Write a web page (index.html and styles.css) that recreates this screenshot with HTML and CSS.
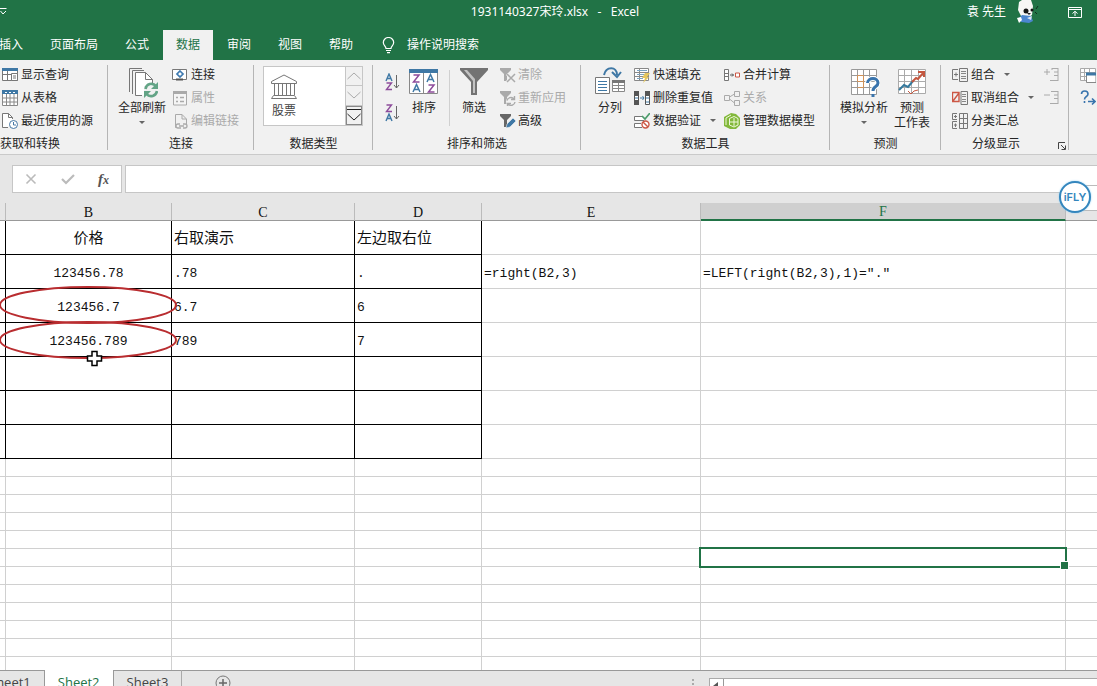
FILE: index.html
```html
<!DOCTYPE html>
<html lang="zh-CN">
<head>
<meta charset="utf-8">
<title>1931140327宋玲.xlsx - Excel</title>
<link rel="stylesheet" href="styles.css">
</head>
<body>
<div class="app">
<header class="titlebar">
  <button class="qat" aria-label="自定义快速访问工具栏"><svg width="8" height="8" viewBox="0 0 8 8"><path d="M0 .5H6.500M.5 3L3 6L6 3" fill="none" stroke="#fff"/></svg></button>
  <h1 class="doc-title">1931140327宋玲.xlsx&nbsp;&nbsp; -&nbsp;&nbsp; Excel</h1>
  <div class="account">
    <span>袁 先生</span>
    <svg class="avatar" width="24" height="24" viewBox="0 0 24 24"><path d="M3 2L6 0H15L17 6L16 15L13 17L5 16L2 10Z" fill="#f7f7f5"/><path d="M3 18L6 15L15 16L17 21L13 23L5 22Z" fill="#4c86cf"/><path d="M1 18L5 17L6 20L3 23Z" fill="#fff"/><path d="M11 18L16 16L15 20Z" fill="#dce8f4"/><circle cx="10" cy="11" r="2.500" fill="#161616"/><circle cx="16" cy="10" r="1.500" fill="#161616"/><path d="M11 13L15 13L13 15Z" fill="#222"/><path d="M20 9L22 6M19 12L21 14" stroke="#102f1e"/></svg>
    <button class="ribbon-toggle" aria-label="功能区显示选项"><svg width="14" height="11" viewBox="0 0 14 11"><path d="M.5 .5H13.500V10.500H.5ZM.5 2.500H13.500M7 9V4.500M4.500 6.500L7 4.300L9.500 6.500" fill="none" stroke="#fff"/></svg></button>
  </div>
</header>
<nav class="tabs">
  <button>插入</button><button>页面布局</button><button>公式</button><button class="active">数据</button><button>审阅</button><button>视图</button><button>帮助</button>
  <button class="tell"><svg width="13" height="17" viewBox="0 0 13 17"><path d="M4 11.500C4 9 1.300 8.500 1.300 5.500A5.200 5 0 0 1 11.700 5.500C11.700 8.500 9 9 9 11.500ZM4 13.500H9M5 15.700H8" fill="none" stroke="#fff" stroke-width="1.200"/></svg>操作说明搜索</button>
</nav>

<section class="ribbon" aria-label="数据">
  <div class="group g-get">
    <div class="body"><div class="stack">
      <button><svg viewBox="0 0 16 16"><path d="M.5 1.500H15.500V13.500H.5ZM.5 7.500H9.500M5.500 4V13" fill="#fff" stroke="#777"/><path d="M0 1H16V4H0Z" fill="#3f78a5"/><path d="M9.500 6.500H15.500V13.500H9.500Z" fill="#fff" stroke="#777"/><path d="M11 9H14M11 11H14" stroke="#777"/></svg>显示查询</button>
      <button><svg viewBox="0 0 16 16"><path d="M.5 .5H15.500V15.500H.5ZM.5 8H16M.5 12H16M4.500 3V16M8 3V16M12 3V16" fill="#fff" stroke="#888"/><path d="M0 0H16V4H0Z" fill="#3f78a5"/><path d="M3 2.500H5M7 2.500H9M11 2.500H13" stroke="#fff"/></svg>从表格</button>
      <button><svg viewBox="0 0 16 16"><path d="M6 14.500H.5V.5H6.500L10.500 4.500V6" fill="#fff" stroke="#777"/><path d="M6.500 .5V4.500H10.500" fill="none" stroke="#777"/><circle cx="11.500" cy="11.500" r="4" fill="#fff" stroke="#4677a5"/><path d="M11.500 9V12H14" fill="none" stroke="#4677a5"/></svg>最近使用的源</button>
    </div></div>
    <h2>获取和转换</h2>
  </div>

  <div class="group g-conn">
    <div class="body">
      <button class="big"><svg width="32" height="32" viewBox="0 0 32 32"><path d="M3.500 26V2.500H16M6.500 28V4.500H18" fill="none" stroke="#777"/><path d="M9.500 29.500V6.500H19.500L26.500 13.500V20H18V29.500Z" fill="#fff"/><path d="M16 29.500H9.500V6.500H19.500L26.500 13.500V17M19.500 6.500V13.500H26.500" fill="none" stroke="#777"/><path d="M19.500 23A6 6 0 0 1 30 20M31 25A6 6 0 0 1 20.500 28" fill="none" stroke="#63a486" stroke-width="2.600"/><path d="M32 16V23H25ZM18 32V25H25Z" fill="#63a486"/></svg><span>全部刷新</span><i class="caret"></i></button>
      <div class="stack">
        <button><svg viewBox="0 0 16 16"><path d="M.5 2.500H14.500V12.500H.5Z" fill="#fff" stroke="#777"/><path d="M8 4L11 7L8 10L5 7Z" fill="none" stroke="#3e7ab0" stroke-width="1.700"/><path d="M4 12.500H11" stroke="#555" stroke-width="2"/></svg>连接</button>
        <button disabled><svg viewBox="0 0 16 16"><path d="M1.500 1.500H14.500V15H1.500Z" fill="#f5f5f5" stroke="#aaa"/><path d="M1 2.500H15" stroke="#aaa" stroke-width="3"/><path d="M4 7.500H6M8 7.500H12M4 11.500H6M8 11.500H12" stroke="#aaa" stroke-width="1.500"/></svg>属性</button>
        <button disabled><svg viewBox="0 0 16 16"><path d="M5 14.500H3.500V1.500H10L14.500 6V11M10 1.500V6H14" fill="none" stroke="#aaa"/><path d="M8 11H6A2 2 0 0 0 6 15H9M11 11H13A2 2 0 0 1 13 15H11M7 13H12" fill="none" stroke="#aaa" stroke-width="1.300"/></svg>编辑链接</button>
      </div>
    </div>
    <h2>连接</h2>
  </div>

  <div class="group g-types">
    <div class="body">
      <div class="gallery">
        <button class="stock"><svg width="28" height="26" viewBox="0 0 28 26"><path d="M1.500 7.500L14 1L26.500 7.500V9.500H1.500ZM4.500 9.500V21M8.500 9.500V21M12.500 9.500V21M16.500 9.500V21M20.500 9.500V21M24.500 9.500V21M3.500 21.500H24.500L26.500 24.500H1.500Z" fill="none" stroke="#777"/></svg>股票</button>
        <div class="gallery-nav">
          <button disabled aria-label="上一行"><svg width="14" height="8" viewBox="0 0 14 8"><path d="M.5 7L7 1L13.500 7" fill="none" stroke="#aaa"/></svg></button>
          <button disabled aria-label="下一行"><svg width="14" height="8" viewBox="0 0 14 8"><path d="M.5 1L7 7L13.500 1" fill="none" stroke="#aaa"/></svg></button>
          <button class="more" aria-label="其他"><svg width="14" height="12" viewBox="0 0 14 12"><path d="M0 .5H14M.5 5L7 11L13.500 5" fill="none" stroke="#222"/></svg></button>
        </div>
      </div>
    </div>
    <h2>数据类型</h2>
  </div>

  <div class="group g-sort">
    <div class="body">
      <div class="az">
        <button aria-label="升序"><svg width="15" height="18" viewBox="0 0 15 18"><g fill="none" stroke-width="1.400"><path class="blue" d="M1 8L4 1L7 8M2 5.500H6"/><path class="violet" d="M1.500 10H6.500L1.500 16.500H7"/></g><path d="M11.500 2V15M9 12L11.500 15L14 12" fill="none" stroke="#666"/></svg></button>
        <button aria-label="降序"><svg width="15" height="18" viewBox="0 0 15 18"><g fill="none" stroke-width="1.400"><path class="violet" d="M1.500 1H6.500L1.500 7.500H7"/><path class="blue" d="M1 17L4 10L7 17M2 14.500H6"/></g><path d="M11.500 2V15M9 12L11.500 15L14 12" fill="none" stroke="#666"/></svg></button>
      </div>
      <button class="big sort"><svg width="30" height="32" viewBox="0 0 30 32"><path d="M.5 3.500H28.500V27.500H.5ZM14.500 7V27" fill="#fff" stroke="#888"/><path d="M0 3H29V7H0Z" fill="#3f78a5"/><g fill="none" stroke-width="1.500"><path class="violet" d="M4.500 9H10L4.500 16H10.500M19.500 19H25L19.500 26H25.500"/><path class="blue" d="M4 26L7.500 18.500L11 26M5 23.500H10M18 16L21.500 8.500L25 16M19 13.500H24"/></g></svg><span>排序</span></button>
      <div class="rule"></div>
      <button class="big filter"><svg width="28" height="32" viewBox="0 0 28 32"><path d="M0 2H28V4L17 16V29H11V16L0 4Z" fill="#737373"/><path d="M4 4H7L15 13V27H13V15Z" fill="#c2c2c2"/></svg><span>筛选</span></button>
      <div class="stack">
        <button disabled><svg viewBox="0 0 16 16"><path d="M0 1H11V3L7 7V14H4V7L0 3Z" fill="#aaa"/><path d="M7 7L15 15M15 7L7 15" stroke="#f1f1f1" stroke-width="3"/><path d="M7 7L15 15M15 7L7 15" stroke="#aaa" stroke-width="1.500"/></svg>清除</button>
        <button disabled><svg viewBox="0 0 16 16"><path d="M0 1H11V3L7 7V14H4V7L0 3Z" fill="#aaa"/><circle cx="11" cy="11.500" r="5" fill="#f1f1f1"/><path d="M7 10.500A4 4 0 0 1 14 9M15 12A4 4 0 0 1 8 14M14.500 6V9.500H11M7.500 16.500V13.500H11" fill="none" stroke="#aaa" stroke-width="1.400"/></svg>重新应用</button>
        <button><svg viewBox="0 0 16 16"><path d="M0 1H11V3L7 7V14H4V7L0 3Z" fill="#666"/><path d="M6 15L7 11L13 5L16 8L10 14Z" fill="#3f78a5" stroke="#f1f1f1" stroke-width=".6"/></svg>高级</button>
      </div>
    </div>
    <h2>排序和筛选</h2>
  </div>

  <div class="group g-tools">
    <div class="body">
      <button class="big"><svg width="32" height="32" viewBox="0 0 32 32"><path d="M1.500 11.500H15.500V27.500H1.500Z" fill="#fff" stroke="#777"/><path d="M4 15.500H13M4 18.500H13M4 21.500H13M4 24.500H13" stroke="#3f78a5"/><path d="M18.500 15.500H30.500V25.500H18.500ZM24.500 17V25M19 19.500H30M19 22.500H30" fill="#fff" stroke="#888"/><path d="M18 15.500H31" stroke="#777" stroke-width="3"/><path d="M10 9C12 0 23 0 23 9" fill="none" stroke="#3f78a5" stroke-width="2"/><path d="M18 6L23 11L27 6" fill="none" stroke="#3f78a5" stroke-width="2"/></svg><span>分列</span></button>
      <div class="stack">
        <button><svg viewBox="0 0 16 16"><path d="M.5 1.500H14.500V13.500H.5ZM.5 5.500H14M.5 9.500H14M5.500 1.500V13" fill="#fff" stroke="#888"/><path d="M3 3.500H13M3 7.500H12M3 11.500H9" stroke="#7ba4c2"/><path d="M11 6H16L13 10H15L9 16L11 11H8Z" fill="#e5c65f"/></svg>快速填充</button>
        <button><svg viewBox="0 0 16 16"><path d="M.5 1.500H4.500V14.500H.5ZM11.500 1.500H15.500V14.500H11.500Z" fill="#fff" stroke="#555"/><path d="M0 1H5V6H0ZM0 10H5V15H0ZM11 1H16V6H11Z" fill="#555"/><path d="M1 8H4M12 8H15M12 12H15M6 8H10M8.500 6L10 8L8.500 10" fill="none" stroke="#3f78a5"/></svg>删除重复值</button>
        <button><svg viewBox="0 0 16 16"><path d="M8 3.500H.5V7.500H10M7 10.500H.5V14.500H8" fill="#fff" stroke="#777"/><path d="M8 3L11 6L16 0" fill="none" stroke="#4b9b6a" stroke-width="1.700"/><circle cx="11.500" cy="11.500" r="3.500" fill="#fff" stroke="#cc5745" stroke-width="1.400"/><path d="M9 9L14 14" stroke="#cc5745" stroke-width="1.400"/></svg>数据验证<i class="caret"></i></button>
      </div>
      <div class="stack second">
        <button><svg viewBox="0 0 16 16"><path d="M.5 2.500H4.500V13.500H.5ZM.5 6.500H4M.5 9.500H4" fill="#fff" stroke="#777"/><path d="M6 8H9.500M8 6.500L9.500 8L8 9.500" fill="none" stroke="#555"/><path d="M11.500 6H15.500V10H11.500Z" fill="#fff" stroke="#cc5745"/></svg>合并计算</button>
        <button disabled><svg viewBox="0 0 16 16"><path d="M.5 5.500H5.500V10.500H.5ZM10.500 1.500H15.500V6.500H10.500ZM10.500 10.500H15.500V15.500H10.500ZM5.500 7L10.500 4M5.500 9L10.500 13" fill="none" stroke="#aaa"/></svg>关系</button>
        <button><svg viewBox="0 0 16 16"><path d="M0 4L7 0L12 1L16 5V12L12 16H6L0 13Z" fill="#82b83b"/><path d="M2 12V5L7 2M5.500 5.500L10 3.500L14 5.500V12L10 14L5.500 12ZM10 5V13M5.500 9H14" fill="none" stroke="#eff8dc"/></svg>管理数据模型</button>
      </div>
    </div>
    <h2>数据工具</h2>
  </div>

  <div class="group g-forecast">
    <div class="body">
      <button class="big"><svg width="32" height="32" viewBox="0 0 32 32"><path d="M3.500 3.500H28.500V28.500H3.500ZM3.500 9.500H28M3.500 15.500H28M3.500 21.500H28M9.500 3V29M15.500 3V29M21.500 3V29" fill="#fff" stroke="#999"/><path d="M9.500 9.500H15.500V15.500H9.500ZM9.500 21.500H15.500V15.500" fill="none" stroke="#d09157"/><path d="M19.500 17C20 11 30 11 30 17C30 21 25 20 25 25" fill="none" stroke="#fff" stroke-width="5"/><path d="M19.500 17C20 11 30 11 30 17C30 21 25 20 25 25" fill="none" stroke="#3974ad" stroke-width="3"/><path d="M23.500 28H26.500V31H23.500Z" fill="#3974ad"/></svg><span>模拟分析</span><i class="caret"></i></button>
      <button class="big"><svg width="32" height="32" viewBox="0 0 32 32"><path d="M2.500 3.500H29.500V27.500H2.500ZM2.500 9.500H29M2.500 15.500H29M2.500 21.500H29M8.500 3V27M15.500 3V27M22.500 3V27" fill="#fff" stroke="#aaa"/><path d="M3 24L8 19L12 21L17 15" fill="none" stroke="#34799d" stroke-width="2"/><path d="M16 16L20 12L22 13L28 6M22 6H28V11" fill="none" stroke="#c4573f" stroke-width="2"/><path d="M12 25L15 28L18 25L22 24" fill="none" stroke="#c4573f"/></svg><span>预测<br>工作表</span></button>
    </div>
    <h2>预测</h2>
  </div>

  <div class="group g-outline">
    <div class="body">
      <div class="stack">
        <button><svg viewBox="0 0 16 16"><path d="M6 2.500H.5V12.500H6M2 7.500H6M4 5.500V9.500M7.500 1.500H15.500V14.500H7.500Z" fill="none" stroke="#777"/><path d="M9 4.500H14M9 6.500H14M9 9.500H14M9 11.500H14" stroke="#888"/></svg>组合<i class="caret"></i></button>
        <button><svg viewBox="0 0 16 16"><path d="M9 1.500H15.500V14.500H9Z" fill="none" stroke="#777"/><path d="M10 4.500H14M10 6.500H14M10 9.500H14M10 11.500H14" stroke="#888"/><path d="M7 2.500H.5V11.500H7ZM1 11L7 3" fill="none" stroke="#cc5745" stroke-width="1.400"/></svg>取消组合<i class="caret"></i></button>
        <button><svg viewBox="0 0 16 16"><path d="M5 .5H.5V6.500H5M5 8.500H.5V15.500H5M2 3.500H5M2 12H5M3.500 2V5M3.500 10.500V14M7.500 .5H15.500V15.500H7.500ZM11.500 0V16M7.500 5.500H16M7.500 10.500H16" fill="none" stroke="#777"/></svg>分类汇总</button>
      </div>
      <div class="stack detail">
        <button disabled aria-label="显示明细数据"><svg viewBox="0 0 16 16"><path d="M0 5H6M3 2V8M8 1.500H14M10 5H14M10 8.500H14M6 13.500H14M8 1V3M14 1V14" fill="none" stroke="#aaa"/></svg></button>
        <button disabled aria-label="隐藏明细数据"><svg viewBox="0 0 16 16"><path d="M0 5H6M7 1.500H14M10 5H14M10 8.500H14M6 13.500H14M14 1V14" fill="none" stroke="#aaa"/></svg></button>
      </div>
    </div>
    <h2>分级显示</h2>
    <button class="launcher" aria-label="分级显示设置"><svg width="8" height="8" viewBox="0 0 8 8"><path d="M.5 7V.5H7M3 3L7 7M7.500 3.500V7.500H3.500" fill="none" stroke="#444"/></svg></button>
  </div>

  <div class="group g-last">
    <div class="body"><div class="stack">
      <button aria-label="数据分析"><svg viewBox="0 0 16 16"><path d="M.5 1.500H15.500V13.500H.5ZM.5 5.500H15M.5 9.500H15M4.500 1.500V13M9.500 1.500V13" fill="#fff" stroke="#aaa"/><path d="M6.500 6.500H16V15.500H6.500Z" fill="#fff" stroke="#888"/><path d="M6 7H16" stroke="#3f78a5" stroke-width="3"/></svg></button>
      <button aria-label="规划求解"><svg viewBox="0 0 16 16"><path d="M1.500 4C1.500 0 8 0 8 4C8 7 4.500 6 4.500 9.500M4.500 11V13M8 11.500H15M12 8.500L15 11.500L12 14.500" fill="none" stroke="#3974ad" stroke-width="1.600"/></svg></button>
    </div></div>
  </div>
</section>

<div class="formula-bar">
  <div class="fx-tools">
    <button aria-label="取消"><svg width="12" height="12" viewBox="0 0 12 12"><path d="M1.500 1.500L10.500 10.500M10.500 1.500L1.500 10.500" stroke="#bbb" stroke-width="1.600"/></svg></button>
    <button aria-label="输入"><svg width="14" height="12" viewBox="0 0 14 12"><path d="M1 6L5 10L13 2" fill="none" stroke="#bbb" stroke-width="2.200"/></svg></button>
    <button class="fx" aria-label="插入函数">f<small>x</small></button>
  </div>
  <input class="formula" type="text" aria-label="编辑栏">
  <div class="ifly-tail"></div>
  <div class="ifly"><span>iFLY</span></div>
</div>

<main class="sheet">
<table>
<colgroup><col class="a"><col class="b"><col class="c"><col class="d"><col class="e"><col class="f"><col></colgroup>
<thead><tr><th></th><th>B</th><th>C</th><th>D</th><th>E</th><th class="sel">F</th><th></th></tr></thead>
<tbody class="data">
<tr><td></td><td>价格</td><td>右取演示</td><td>左边取右位</td><td></td><td></td><td></td></tr>
<tr><td></td><td>123456.78</td><td>.78</td><td>.</td><td>=right(B2,3)</td><td>=LEFT(right(B2,3),1)="."</td><td></td></tr>
<tr><td></td><td>123456.7</td><td>6.7</td><td>6</td><td></td><td></td><td></td></tr>
<tr><td></td><td>123456.789</td><td>789</td><td>7</td><td></td><td></td><td></td></tr>
<tr><td></td><td></td><td></td><td></td><td></td><td></td><td></td></tr>
<tr><td></td><td></td><td></td><td></td><td></td><td></td><td></td></tr>
<tr><td></td><td></td><td></td><td></td><td></td><td></td><td></td></tr>
</tbody>
<tbody>
<tr><td></td><td></td><td></td><td></td><td></td><td></td><td></td></tr>
<tr><td></td><td></td><td></td><td></td><td></td><td></td><td></td></tr>
<tr><td></td><td></td><td></td><td></td><td></td><td></td><td></td></tr>
<tr><td></td><td></td><td></td><td></td><td></td><td></td><td></td></tr>
<tr><td></td><td></td><td></td><td></td><td></td><td></td><td></td></tr>
<tr><td></td><td></td><td></td><td></td><td></td><td class="current"></td><td></td></tr>
<tr><td></td><td></td><td></td><td></td><td></td><td></td><td></td></tr>
<tr><td></td><td></td><td></td><td></td><td></td><td></td><td></td></tr>
<tr><td></td><td></td><td></td><td></td><td></td><td></td><td></td></tr>
<tr><td></td><td></td><td></td><td></td><td></td><td></td><td></td></tr>
<tr><td></td><td></td><td></td><td></td><td></td><td></td><td></td></tr>
<tr><td></td><td></td><td></td><td></td><td></td><td></td><td></td></tr>
</tbody>
</table>
<svg class="marks" width="180" height="90" viewBox="0 0 180 90"><g fill="none" stroke="#b92d30" stroke-width="2"><ellipse cx="88" cy="23" rx="88" ry="18"/><ellipse cx="88" cy="58" rx="88" ry="18"/></g><path d="M92 69.500H97V74H101.500V79H97V83.500H92V79H87.500V74H92Z" fill="#fff" stroke="#000" stroke-width="1.500"/></svg>
</main>

<footer class="bottom">
  <nav class="sheets"><button class="first">Sheet1</button><button class="active">Sheet2</button><button>Sheet3</button></nav>
  <button class="add" aria-label="新工作表"><svg width="16" height="16" viewBox="0 0 16 16"><path d="M8 4V12M4 8H12" stroke="#666" stroke-width="1.500"/><circle cx="8" cy="8" r="7" fill="none" stroke="#777"/></svg></button>
  <svg class="dots" width="4" height="12" viewBox="0 0 4 12"><path d="M1 1H3V3H1ZM1 5H3V7H1ZM1 9H3V11H1Z" fill="#aaa"/></svg>
  <div class="hscroll"><button aria-label="向左滚动"><svg width="6" height="8" viewBox="0 0 6 8"><path d="M5 0V8L0 4Z" fill="#555"/></svg></button></div>
</footer>
</div>
</body>
</html>
```

FILE: styles.css
```css
* { box-sizing: border-box; }
body { margin: 0; font: 12px/16px "Noto Sans", "Noto Sans CJK SC", sans-serif; color: #262626; }
button { margin: 0; padding: 0; border: 0; background: none; color: inherit; font: inherit; white-space: nowrap; }
h1, h2 { margin: 0; font: inherit; }
svg { display: block; flex: none; }

.app { display: flex; flex-direction: column; height: 100vh; overflow: hidden; background: #e6e6e6; }

/* title bar and ribbon tabs */
.titlebar { display: grid; grid-template-columns: 1fr auto 1fr; align-items: center; height: 24px; padding-right: 15px; background: #217346; color: #fff; }
.qat { justify-self: start; }
.doc-title { padding-left: 28px; white-space: pre; }
.account { display: flex; align-items: center; justify-self: end; }
.account span { margin-right: 10px; }
.ribbon-toggle { margin-left: 28px; }
.tabs { display: flex; align-items: stretch; gap: 1px; height: 36px; padding-top: 6px; margin-left: -14px; background: #217346; color: #fff; }
.tabs button { flex: none; padding: 0 13px; line-height: 28px; }
.tabs .active { background: #f1f1f1; color: #217346; }
.tabs .tell { display: flex; align-items: center; gap: 12px; margin-left: 2px; }

/* ribbon */
.ribbon { display: flex; flex: none; height: 95px; padding-top: 3px; background: #f1f1f1; border-bottom: 1px solid #cacaca; overflow: hidden; }
.group { position: relative; flex: none; display: flex; flex-direction: column; }
.group::after { content: ""; position: absolute; right: 0; top: 2px; bottom: 4px; width: 1px; background: #b5b5b5; }
.group h2 { height: 21px; line-height: 21px; text-align: center; white-space: nowrap; }
.body { display: flex; height: 70px; }
.stack { display: flex; flex-direction: column; }
.stack button { display: flex; align-items: center; gap: 3px; height: 23px; }
.stack svg { width: 16px; height: 16px; }
.ribbon button:disabled { color: #aaa; }
.big { display: flex; flex-direction: column; align-items: center; width: 48px; padding-top: 3px; line-height: 15px; }
.big span { padding-top: 2px; }
.caret { width: 0; height: 0; border: 3px solid transparent; border-top-color: #666; border-bottom: 0; }
.big .caret { margin-top: 6px; }
.stack .caret { margin-left: 6px; }
.g-get { width: 108px; padding-left: 2px; }
.g-get h2 { margin-left: -2px; text-align: left; }
.g-conn { width: 146px; }
.g-conn .body { padding-left: 10px; gap: 6px; }
.g-types { width: 119px; }
.g-types .body { padding: 3px 10px 7px 9px; }
.gallery { display: flex; flex: 1; border: 1px solid #c6c6c6; background: #fff; }
.stock { display: flex; flex-direction: column; align-items: center; gap: 3px; padding: 7px 6px 0; color: #444; }
.gallery-nav { display: grid; grid-template-rows: repeat(3, 1fr); width: 17px; margin-left: auto; background: #f1f1f1; border-left: 1px solid #c6c6c6; }
.gallery-nav button { display: grid; place-items: center; border-bottom: 1px solid #c6c6c6; }
.gallery-nav .more { border: 1px solid #888; }
.g-sort { width: 208px; }
.g-sort .body { padding-left: 12px; }
.blue { stroke: #3f78a5; }
.violet { stroke: #8d4c9b; }
.az { display: flex; flex-direction: column; gap: 13px; padding-top: 10px; }
.sort { width: 48px; }
.rule { width: 1px; margin: 7px 0 7px 1px; background: #d0d0d0; }
.filter { margin-right: 2px; }
.g-sort .stack button { gap: 2px; }
.g-tools { width: 249px; }
.g-tools .body { padding-left: 5px; }
.second { margin-left: 8px; }
.g-forecast { width: 111px; }
.g-forecast .body { padding-left: 10px; }
.g-outline { width: 128px; }
.g-outline .body { padding-left: 11px; }
.g-outline h2 { padding-right: 18px; }
.detail { position: absolute; right: 9px; top: 0; }
.launcher { position: absolute; right: 3px; bottom: 4px; }
.g-last { padding-left: 11px; }
.g-last::after { display: none; }

/* formula bar */
.formula-bar { position: relative; display: flex; flex: none; gap: 3px; height: 48px; padding: 10px 0 10px 12px; }
.fx-tools { display: flex; align-items: center; justify-content: space-between; width: 110px; padding: 0 12px; background: #fff; border: 1px solid #c6c6c6; }
.fx { font: italic bold 15px/16px "Liberation Serif", serif; color: #555; }
.fx small { font-size: 12px; }
.formula { flex: 1; min-width: 0; border: 1px solid #c6c6c6; border-right: 0; background: #fff; outline: 0; }
.ifly-tail { position: absolute; right: 0; top: 30px; width: 22px; height: 26px; background: #fff; border: 1px solid #bbb; border-right: 0; z-index: 2; }
.ifly { position: absolute; right: 6px; top: 26px; width: 32px; height: 32px; display: grid; place-items: center; border: 2px solid #3486bd; border-radius: 50%; background: #fff; color: #3486bd; font: 600 11px/12px "Inter", sans-serif; z-index: 3; box-shadow: 0 0 2px #8fd0f5; }

/* worksheet */
.sheet { position: relative; flex: 1; min-height: 0; overflow: hidden; background: #fff; }
table { width: 100%; table-layout: fixed; border-collapse: separate; border-spacing: 0; font: 13px/16px "Liberation Mono", "Noto Sans CJK SC", monospace; color: #111; }
.a { width: 6px; }
.b { width: 166px; }
.c { width: 183px; }
.d { width: 127px; }
.e { width: 219px; }
.f { width: 365px; }
th { height: 18px; padding: 3px 0 0; background: #e6e6e6; border-right: 1px solid #bbb; border-bottom: 1px solid #999; font: 14px/14px "Liberation Serif", serif; }
th.sel { padding-top: 2px; background: #cfcfcf; border-bottom: 2px solid #217346; color: #217346; }
td { height: 18px; padding: 0; border-right: 1px solid #d0d0d0; border-bottom: 1px solid #d0d0d0; white-space: nowrap; }
th:last-child, td:last-child { border-right: 0; }
.data td { height: 34px; padding: 4px 0 0 2px; }
.data td:nth-child(-n+4) { border-color: #000; }
.data td:nth-child(2) { text-align: center; padding-left: 0; }
.data tr:first-child td { font-size: 15px; }
.current { position: relative; }
.current::before { content: ""; position: absolute; inset: -2px; border: 2px solid #217346; z-index: 1; }
.current::after { content: ""; position: absolute; right: -4px; bottom: -4px; width: 7px; height: 7px; background: #217346; border: 1px solid #fff; z-index: 2; }
.marks { position: absolute; left: 0; top: 79px; }

/* sheet tabs */
.bottom { display: flex; flex: none; align-items: flex-start; height: 16px; overflow: hidden; background: #e6e6e6; font: 13px/24px "Open Sans", sans-serif; color: #444; box-shadow: inset 0 1px #999; }
.sheets { display: flex; height: 24px; }
.sheets button { padding: 0 13px; border-right: 1px solid #999; }
.sheets .first { margin-left: -24px; }
.sheets .active { background: #fff; color: #217346; }
.sheets button:last-child { border-color: #aaa; }
.add { margin: 5px 0 0 33px; }
.dots { margin: 8px 14px 0 auto; }
.hscroll { width: 35.4%; height: 20px; margin-top: 8px; background: #fff; border: 1px solid #aaa; border-right: 0; }
.hscroll button { display: grid; place-items: center; width: 14px; height: 14px; border-right: 1px solid #999; }
```
